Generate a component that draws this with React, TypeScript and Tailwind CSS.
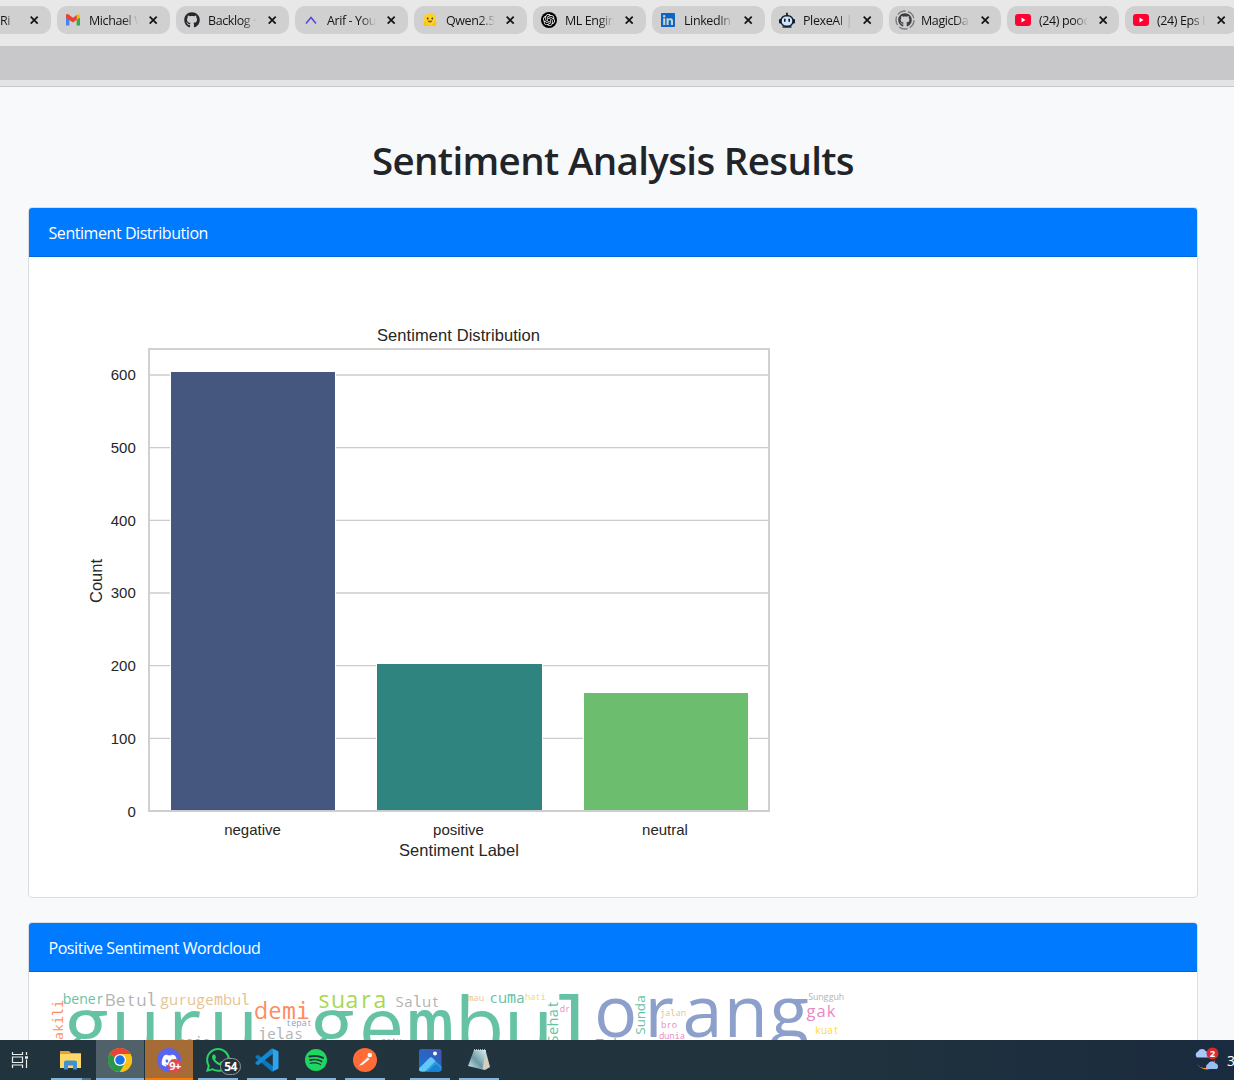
import React from "react";
import { SiWhatsapp, SiSpotify, SiOpenai } from "react-icons/si";
import { FaGithub, FaDiscord, FaLinkedin } from "react-icons/fa";

function Gmail() {
  return (
    <svg width="16" height="16" viewBox="0 0 16 16">
      <path d="M1 13.500V5l3.400 2.200v6.300z" fill="#4285f4" />
      <path d="M11.600 7.200L15 5v8.500h-3.400z" fill="#34a853" />
      <path d="M1 6V3.600C1 2 2.600 1.700 3.600 2.500L8 5.800l4.400-3.300V7L8 10.500z" fill="#ea4335" />
      <path d="M11.800 2.900c1.200-1.100 3.200-.7 3.200.8V5.500l-3.200 2.300z" fill="#fbbc04" />
    </svg>
  );
}

function Caret() {
  return (
    <svg width="16" height="16" viewBox="0 0 16 16" fill="none">
      <path d="M3 11.500L8 5.500l5 6" stroke="#5548e0" strokeWidth="1.600" />
    </svg>
  );
}

function Hugging() {
  return (
    <svg width="16" height="16" viewBox="0 0 16 16">
      <circle cx="8" cy="7.500" r="6.300" fill="#ffd21e" />
      <path d="M2 9.500q2-.5 4 3.800h4q2-4.300 4-3.800 1.200 2-.5 4.500h-11Q.8 11.500 2 9.500z" fill="#ffc21c" />
      <circle cx="5.700" cy="6.500" r=".9" fill="#3a3b45" />
      <circle cx="10.300" cy="6.500" r=".9" fill="#3a3b45" />
      <path d="M5.500 8.300q2.500 1 5 0-.5 2.300-2.500 2.300T5.500 8.300z" fill="#8a4b20" />
    </svg>
  );
}

function Gpt() {
  return (
    <span className="flex size-4 shrink-0 items-center justify-center rounded-full bg-black text-white">
      <SiOpenai size={12} />
    </span>
  );
}

function Robot() {
  return (
    <svg width="16" height="16" viewBox="0 0 16 16">
      <path d="M8 4V.8" stroke="#111c2c" strokeWidth="1.800" />
      <rect x="0" y="7" width="16" height="4.500" rx="1" fill="#111c2c" />
      <rect x="2" y="3.800" width="12" height="10.500" rx="5" fill="#cfe6fa" stroke="#111c2c" strokeWidth="1.500" />
      <rect x="5" y="6.500" width="1.600" height="3.500" rx=".8" fill="#111c2c" />
      <rect x="9.400" y="6.500" width="1.600" height="3.500" rx=".8" fill="#111c2c" />
      <path d="M3.500 15h9" stroke="#111c2c" strokeWidth="1.400" />
    </svg>
  );
}

function GithubRing() {
  return (
    <span className="relative -mx-0.5 flex size-5 shrink-0 items-center justify-center">
      <svg className="absolute inset-0" width="20" height="20" viewBox="0 0 20 20" fill="none">
        <circle cx="10" cy="10" r="9" stroke="#77797d" strokeWidth="1.300" strokeDasharray="9 2.300" />
      </svg>
      <FaGithub size={14} color="#3c3e42" />
    </span>
  );
}

function Youtube() {
  return (
    <svg width="16" height="16" viewBox="0 0 16 16">
      <rect x="0" y="2" width="16" height="12" rx="3" fill="#ff0033" />
      <path d="M6.500 5.500v5l4-2.500z" fill="#fff" />
    </svg>
  );
}

const wide = "w-[113px]";
const narrow = "w-[112px]";
const tabs: { icon: React.ReactNode; title: string; width: string }[] = [
  { icon: null, title: "Edit - Ri", width: wide },
  { icon: <Gmail />, title: "Michael W", width: wide },
  { icon: <FaGithub size={16} color="#24292f" />, title: "Backlog ·", width: wide },
  { icon: <Caret />, title: "Arif - You", width: wide },
  { icon: <Hugging />, title: "Qwen2.5", width: wide },
  { icon: <Gpt />, title: "ML Engin", width: wide },
  { icon: <FaLinkedin size={16} color="#0a66c2" />, title: "LinkedIn", width: wide },
  { icon: <Robot />, title: "PlexeAI | ", width: narrow },
  { icon: <GithubRing />, title: "MagicDa", width: narrow },
  { icon: <Youtube />, title: "(24) pood", width: narrow },
  { icon: <Youtube />, title: "(24) Eps I", width: narrow },
];

function Tab({ icon, title, width }: { icon: React.ReactNode; title: string; width: string }) {
  return (
    <div className={`flex h-7 shrink-0 items-center rounded-[10px] bg-[#d0d0d1] pl-2 ${width}`}>
      <span className="flex w-4 shrink-0 items-center justify-center">{icon}</span>
      <span className="ml-2 mt-px w-[49px] shrink-0 overflow-hidden whitespace-nowrap bg-linear-to-r from-[#151515] from-70% to-transparent bg-clip-text text-[12.500px] leading-5 tracking-[-0.400px] text-transparent">
        {title}
      </span>
      <svg className="ml-[11px] shrink-0" width="9" height="9" viewBox="0 0 9 9">
        <path d="M.700 .700l7 7M7.700 .700L.700 7.700" stroke="#151515" strokeWidth="1.800" />
      </svg>
    </div>
  );
}

const ticks = [0, 100, 200, 300, 400, 500, 600];
const bars = [
  { label: "negative", x: 171, w: 165, top: 372, cx: 252.5, fill: "#46577f" },
  { label: "positive", x: 377, w: 166, top: 664, cx: 458.5, fill: "#2f847f" },
  { label: "neutral", x: 584, w: 165, top: 693, cx: 665, fill: "#6dbd6e" },
];

function BarChart() {
  return (
    <svg
      className="block font-['Liberation_Sans',Arial,sans-serif]"
      width="800"
      height="600"
      viewBox="48 277 800 600"
      fill="#262626"
      fontSize="15"
    >
      <text x="458.500" y="341" fontSize="16.500" textAnchor="middle" textLength="163">Sentiment Distribution</text>
      {ticks.map((t) => {
        const y = 811 - t * 0.7267;
        return (
          <g key={t}>
            <line x1="149" x2="769" y1={y} y2={y} stroke="#cccccc" strokeWidth="1.300" />
            <text x="135.800" y={y + 5.5} textAnchor="end">{t}</text>
          </g>
        );
      })}
      {bars.map((b) => (
        <g key={b.label}>
          <rect x={b.x - 0.5} y={b.top - 0.5} width={b.w} height={811.5 - b.top} fill={b.fill} stroke="#fff" />
          <text x={b.cx} y="835" textAnchor="middle">{b.label}</text>
        </g>
      ))}
      <rect x="149" y="349" width="620" height="462" fill="none" stroke="#cccccc" strokeWidth="1.800" />
      <text x="459" y="856" fontSize="16.500" textAnchor="middle" textLength="120">Sentiment Label</text>
      <text transform="translate(102 581) rotate(-90)" fontSize="16.500" textAnchor="middle">Count</text>
    </svg>
  );
}

type Word = { t: string; x: number; y: number; w: number; s: number; c: string; v?: boolean };
const green = "#66c2a5";
const blue = "#8da0cb";
const gray = "#b3b3b3";
const tan = "#e5c494";
const coral = "#fc8d62";
const pink = "#e78ac3";
const yellow = "#ffd92f";

const words: Word[] = [
  { t: "guru", x: 62, y: 1055, w: 196, s: 81, c: green },
  { t: "gembul", x: 308, y: 1055, w: 294, s: 81, c: green },
  { t: "orang", x: 594, y: 1037, w: 217, s: 72, c: blue },
  { t: "wakili", x: 63, y: 1048, w: 48, s: 13.5, c: coral, v: true },
  { t: "bener", x: 63, y: 1004, w: 41, s: 14, c: green },
  { t: "Betul", x: 105, y: 1006, w: 52, s: 17, c: gray },
  { t: "gurugembul", x: 160, y: 1005, w: 90, s: 15, c: tan },
  { t: "demi", x: 254, y: 1019, w: 56, s: 23, c: coral },
  { t: "tepat", x: 286, y: 1026, w: 26, s: 8.8, c: blue },
  { t: "jelas", x: 258, y: 1038.5, w: 45, s: 15, c: gray },
  { t: "saja", x: 177, y: 1047, w: 34, s: 14, c: gray },
  { t: "suara", x: 317, y: 1008, w: 70, s: 23, c: "#a6d854" },
  { t: "Salut", x: 395, y: 1007, w: 45, s: 15, c: gray },
  { t: "satu", x: 381, y: 1043.5, w: 21, s: 9, c: coral },
  { t: "mau", x: 468, y: 1001, w: 16, s: 8.8, c: tan },
  { t: "cuma", x: 489, y: 1003, w: 36, s: 15, c: green },
  { t: "hati", x: 525, y: 1000, w: 21, s: 8.8, c: yellow },
  { t: "dr", x: 560, y: 1012, w: 10, s: 8.8, c: pink },
  { t: "Sehat", x: 558, y: 1044, w: 44, s: 14.5, c: green, v: true },
  { t: "Sunda", x: 645, y: 1035, w: 40, s: 13.5, c: green, v: true },
  { t: "Tuh", x: 595, y: 1049, w: 27, s: 14, c: green },
  { t: "jalan", x: 660, y: 1016, w: 26, s: 8.8, c: tan },
  { t: "bro", x: 661, y: 1028, w: 16, s: 8.8, c: pink },
  { t: "dunia", x: 659, y: 1039, w: 26, s: 8.8, c: pink },
  { t: "Sungguh", x: 808, y: 1000, w: 36, s: 8.8, c: gray },
  { t: "gak", x: 806, y: 1017, w: 30, s: 16.5, c: pink },
  { t: "kuat", x: 815, y: 1034, w: 24, s: 10, c: yellow },
];

/* Every letter sits in a cell of equal width; narrow and very wide letters take the monospaced face. */
function WordCloud() {
  return (
    <svg className="block font-['Open_Sans',sans-serif]" width="800" height="400" viewBox="48 992 800 400">
      {words.map((w) => {
        const cell = w.w / w.t.length;
        return (
          <text
            key={w.t}
            transform={w.v ? `translate(${w.x} ${w.y}) rotate(-90)` : `translate(${w.x} ${w.y})`}
            fontSize={w.s}
            fill={w.c}
            textAnchor="middle"
          >
            {w.t.split("").map((ch, i) => (
              <tspan
                key={i}
                x={cell * (i + 0.5)}
                className={"iljmw".includes(ch) ? "font-['DejaVu_Sans_Mono',monospace]" : undefined}
              >
                {ch}
              </tspan>
            ))}
          </text>
        );
      })}
    </svg>
  );
}

function Card({ title, className, children }: { title: string; className: string; children: React.ReactNode }) {
  return (
    <section className={`shrink-0 overflow-hidden rounded border border-[#dcdddf] bg-white ${className}`}>
      <h2 className="h-[49px] border-b border-[#0067d8] bg-[#007bff] pl-[19.500px] text-[16px] leading-[50px] tracking-[-0.440px] text-white">
        {title}
      </h2>
      <div className="pl-[19px] pt-5">{children}</div>
    </section>
  );
}

function TaskView() {
  return (
    <svg width="18" height="18" viewBox="0 0 18 18" fill="none" stroke="#e8edf0" strokeWidth="1.200">
      <path d="M1.500 1v2.500h10V1M1.500 17v-3h10v3M1.500 6h10v5.500h-10zM15.500 1v3M15.500 8.500V17" />
      <path d="M14 6.500h3" strokeWidth="2.500" />
    </svg>
  );
}

function Folder() {
  return (
    <svg width="24" height="24" viewBox="0 0 24 24">
      <path d="M1 3h9l2 2h10v5H1z" fill="#e2a52c" />
      <rect x="1" y="6" width="21" height="14" fill="#ffd766" />
      <path d="M5 21.500v-7q0-2 2-2h9q2 0 2 2v7h-4v-4H9v4z" fill="#3f91d1" />
    </svg>
  );
}

function Chrome() {
  return (
    <svg width="24" height="24" viewBox="0 0 48 48">
      <circle cx="24" cy="24" r="24" fill="#fbc116" />
      <path d="M24 24L3.200 12A24 24 0 0 1 44.800 12z" fill="#ea4335" />
      <path d="M24 24L3.200 12A24 24 0 0 0 24 48L34.400 30z" fill="#279847" />
      <path d="M24 12h20.800A24 24 0 0 1 24 48l10.400-18z" fill="#fbc116" />
      <circle cx="24" cy="24" r="12" fill="#fff" />
      <circle cx="24" cy="24" r="9.500" fill="#1a73e8" />
    </svg>
  );
}

function Discord() {
  return (
    <span className="relative flex size-6 items-center justify-center rounded-full bg-[#5865f2] text-white">
      <FaDiscord size={17} />
      <span className="absolute left-[11px] top-[11px] flex size-[14px] items-center justify-center rounded-full bg-[#e0484d] text-[11px] font-bold tracking-[-0.500px]">
        9+
      </span>
    </span>
  );
}

function Whatsapp() {
  return (
    <span className="relative flex size-6">
      <SiWhatsapp size={24} color="#25d366" />
      <span className="absolute left-[14px] top-[10px] flex h-[17px] w-[21px] items-center justify-center rounded-full border border-[#8b969b] bg-[#26343a] text-[12px] font-bold tracking-[-0.500px] text-white">
        54
      </span>
    </span>
  );
}

function VsCode() {
  return (
    <svg width="24" height="24" viewBox="0 0 24 24">
      <path d="M.6 8.600l1.600-1.500q.6-.4 1.200 0L18 18.200v4.900l-1 .6L.6 9.800q-.5-.6 0-1.200z" fill="#0a78be" />
      <path d="M.6 15.400l1.600 1.500q.6.400 1.200 0L18 5.800V.9l-1-.6L.6 14.200q-.5.600 0 1.200z" fill="#1688d0" />
      <path d="M17 .3l5.800 2.700q.7.300.7 1v16q0 .7-.7 1L17 23.700q.8-.4.8-1.400V1.700q0-1-.8-1.400z" fill="#2aa5ee" />
    </svg>
  );
}

function Postman() {
  return (
    <svg width="24" height="24" viewBox="0 0 24 24">
      <circle cx="12" cy="12" r="12" fill="#ff6c37" />
      <path d="M5.500 18.500l3-3.500 6-6 2 2-6.500 5.500-3 1z" fill="#fff" />
      <circle cx="16.800" cy="7" r="2.300" fill="#fff" />
      <path d="M9.500 14l5.500-4.500" stroke="#ff6c37" strokeWidth=".6" />
    </svg>
  );
}

function Photos() {
  return (
    <svg width="23" height="23" viewBox="0 0 23 23">
      <defs>
        <linearGradient id="sky" x1="0" y1="1" x2="1" y2="0">
          <stop stopColor="#1476d0" />
          <stop offset="1" stopColor="#4054b5" />
        </linearGradient>
        <clipPath id="frame"><rect width="22.500" height="22.500" rx="2.500" /></clipPath>
      </defs>
      <g clipPath="url(#frame)">
        <rect width="23" height="23" fill="url(#sky)" />
        <path d="M0 19.500L10.500 9q1.500-1.300 3 0L23 18v5H0z" fill="#2f9ae0" />
        <path d="M0 19.500L10.500 9q1.500-1.300 3 0l3 3L5.500 23H0z" fill="#62c8f5" />
        <path d="M8 23l7.500-7q1.500-1 3 0l4.500 5v2z" fill="#1b83d3" />
      </g>
      <circle cx="16" cy="4.500" r="2" fill="#fff" />
    </svg>
  );
}

function Notepad() {
  return (
    <svg width="24" height="24" viewBox="0 0 24 24">
      <defs>
        <linearGradient id="paper" x1="1" y1="0" x2="0" y2="1">
          <stop stopColor="#d7f1f3" />
          <stop offset=".55" stopColor="#6b9aa5" />
          <stop offset="1" stopColor="#d3edf0" />
        </linearGradient>
      </defs>
      <path d="M18.500 2l4.500 17-5 3-4-1z" fill="#d5cfc0" />
      <path d="M7 2h12l-3.500 19.500L1 18z" fill="url(#paper)" />
      <path d="M7 2h12" stroke="#dce3e3" strokeWidth="1.500" strokeDasharray="1 1" />
    </svg>
  );
}

function Weather() {
  return (
    <svg width="26" height="26" viewBox="0 0 26 26">
      <path d="M19 5A10 10 0 0 1 3 17q5 7 13 5 8-5 3-17z" fill="#f8a238" />
      <path d="M3 10.500a3.500 3.500 0 0 1 1-6 4.500 4.500 0 0 1 8 0 3 3 0 0 1 2 6z" fill="#a8c8fa" />
      <path d="M13 22a3 3 0 0 1 1-5 4 4 0 0 1 7-1 3.500 3.500 0 0 1 2 6z" fill="#98bdf5" />
      <circle cx="18.500" cy="6.500" r="6" fill="#d92b2f" />
      <text x="18.500" y="10" fontSize="9.500" fontWeight="700" textAnchor="middle" fill="#fff">2</text>
    </svg>
  );
}

const apps: { key: string; icon: React.ReactNode; box: string; line: string }[] = [
  { key: "files", icon: <Folder />, box: "w-10 ml-[11px]", line: "bg-[linear-gradient(90deg,#83b5e0_31px,#4d718c_31px)]" },
  { key: "chrome", icon: <Chrome />, box: "w-12 ml-[5px] bg-[#506169]", line: "bg-[#83b5e0]" },
  { key: "discord", icon: <Discord />, box: "w-12 ml-px bg-[#a56c35]", line: "bg-[#ff7900]" },
  { key: "whatsapp", icon: <Whatsapp />, box: "w-10 ml-[5px]", line: "bg-[#83b5e0]" },
  { key: "vscode", icon: <VsCode />, box: "w-10 ml-[9px]", line: "bg-[#83b5e0]" },
  { key: "spotify", icon: <SiSpotify size={22} color="#1ed760" />, box: "w-10 ml-[9px]", line: "bg-[#83b5e0]" },
  { key: "postman", icon: <Postman />, box: "w-10 ml-[9px]", line: "bg-[#83b5e0]" },
  { key: "photos", icon: <Photos />, box: "w-10 ml-[25px]", line: "bg-[#83b5e0]" },
  { key: "notepad", icon: <Notepad />, box: "w-10 ml-[9px]", line: "bg-[#83b5e0]" },
];

export default function App() {
  return (
    <div className="flex h-[1080px] w-[1234px] flex-col overflow-hidden bg-[#f8f9fb] font-['Open_Sans','Noto_Sans',sans-serif]">
      <header className="shrink-0">
        <div className="flex h-[46px] overflow-hidden bg-[#e8e8e9]">
          <div className="-ml-[62px] mt-1.5 flex gap-1.5">
            {tabs.map((t, i) => <Tab key={i} {...t} />)}
          </div>
        </div>
        <div className="h-[34px] bg-[#c8c8ca]" />
        <div className="h-[7px] border-b border-[#c7c8cb] bg-[#e4e4e6]" />
      </header>
      <main className="flex min-h-0 flex-1 flex-col overflow-hidden pl-7 pr-9">
        <h1 className="mt-12 h-[72px] shrink-0 text-center text-[38.500px] font-semibold leading-[50px] tracking-[-0.650px] text-[#212529]">
          Sentiment Analysis Results
        </h1>
        <Card title="Sentiment Distribution" className="h-[691px]">
          <BarChart />
        </Card>
        <Card title="Positive Sentiment Wordcloud" className="mt-6 h-[500px]">
          <WordCloud />
        </Card>
      </main>
      <footer className="flex h-10 shrink-0 items-stretch bg-linear-to-r from-[#21343d] from-60% to-[#1b2b3f] text-white">
        <div className="flex w-10 items-center justify-center"><TaskView /></div>
        {apps.map((a) => (
          <div key={a.key} className={`flex flex-col ${a.box}`}>
            <div className="flex flex-1 items-center justify-center pt-[2px]">{a.icon}</div>
            <div className={`h-[2px] ${a.line}`} />
          </div>
        ))}
        <div className="ml-auto flex shrink-0 items-center">
          <Weather />
          <span className="ml-[7px] w-[7px] overflow-hidden text-[14px]">31°C</span>
        </div>
      </footer>
    </div>
  );
}
